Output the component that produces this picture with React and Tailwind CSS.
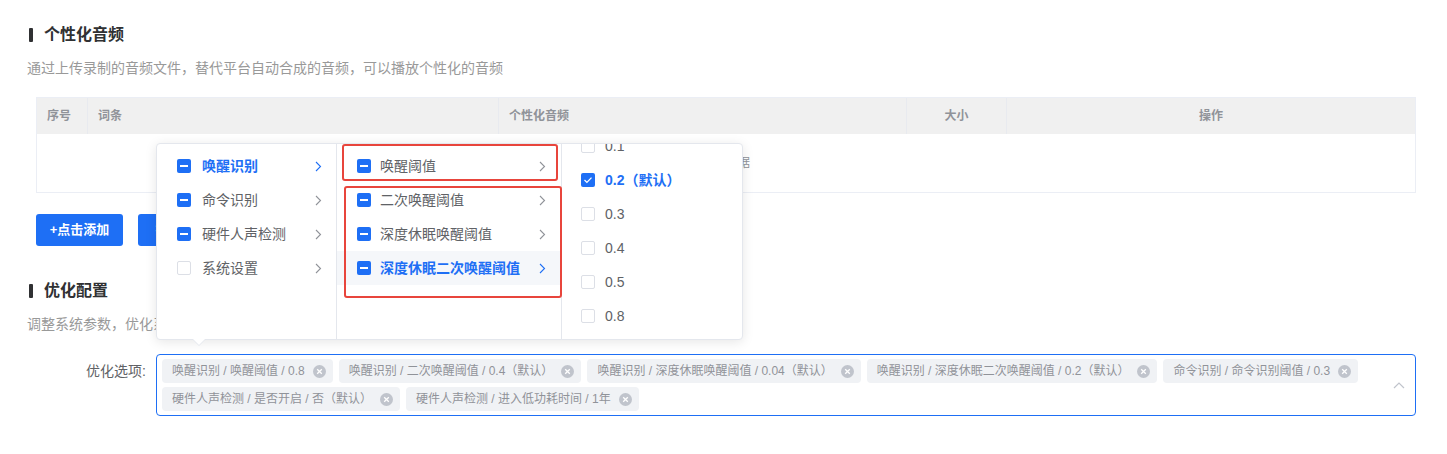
import React, { useLayoutEffect, useRef } from 'react';

const level1 = [
  { label: '唤醒识别', state: 'half', active: true },
  { label: '命令识别', state: 'half' },
  { label: '硬件人声检测', state: 'half' },
  { label: '系统设置', state: 'none' },
];

const level2 = [
  { label: '唤醒阈值', state: 'half' },
  { label: '二次唤醒阈值', state: 'half' },
  { label: '深度休眠唤醒阈值', state: 'half' },
  { label: '深度休眠二次唤醒阈值', state: 'half', active: true },
];

const level3 = [
  { label: '0.1', state: 'none' },
  { label: '0.2（默认）', state: 'checked', active: true },
  { label: '0.3', state: 'none' },
  { label: '0.4', state: 'none' },
  { label: '0.5', state: 'none' },
  { label: '0.8', state: 'none' },
];

const tags = [
  '唤醒识别 / 唤醒阈值 / 0.8',
  '唤醒识别 / 二次唤醒阈值 / 0.4（默认）',
  '唤醒识别 / 深度休眠唤醒阈值 / 0.04（默认）',
  '唤醒识别 / 深度休眠二次唤醒阈值 / 0.2（默认）',
  '命令识别 / 命令识别阈值 / 0.3',
  '硬件人声检测 / 是否开启 / 否（默认）',
  '硬件人声检测 / 进入低功耗时间 / 1年',
];

const Check = ({ state }) => {
  if (state === 'none') {
    return <span className="w-[14px] h-[14px] rounded-[2px] border border-[#dcdfe6] bg-white shrink-0" />;
  }
  return (
    <span className="w-[14px] h-[14px] rounded-[2px] bg-[#1e6ff5] flex items-center justify-center shrink-0">
      {state === 'half' ? (
        <span className="w-[8px] h-[2px] bg-white" />
      ) : (
        <svg width="10" height="8" viewBox="0 0 10 8">
          <path d="M1.5 4l2.4 2.4L8.5 1.6" stroke="#fff" strokeWidth="1.3" fill="none" />
        </svg>
      )}
    </span>
  );
};

const Chevron = ({ active }) => (
  <svg width="7" height="11" viewBox="0 0 7 11" className="shrink-0">
    <path d="M1 1l4.5 4.5L1 10" stroke={active ? '#1e6ff5' : '#909399'} strokeWidth="1.1" fill="none" />
  </svg>
);

const SectionTitle = ({ children }) => (
  <div className="flex items-center h-[22px] pl-[2px]">
    <span className="w-[4px] h-[14px] bg-[#303133] rounded-[1px]" />
    <span className="ml-[11px] text-[16px] font-bold text-[#303133] leading-[22px]">{children}</span>
  </div>
);

const Desc = ({ children }) => (
  <p className="mt-[12px] text-[14px] leading-[20px] text-[#999999]">{children}</p>
);

const CloseDot = () => (
  <span className="w-[13px] h-[13px] rounded-full bg-[#c0c4cc] flex items-center justify-center shrink-0">
    <svg width="7" height="7" viewBox="0 0 7 7">
      <path d="M1.2 1.2l4.6 4.6M5.8 1.2L1.2 5.8" stroke="#fff" strokeWidth="1.3" />
    </svg>
  </span>
);

export default function App() {
  const scrollRef = useRef(null);

  useLayoutEffect(() => {
    if (scrollRef.current) scrollRef.current.scrollTop = 20;
  }, []);

  return (
    <div className="relative w-[1447px] h-[454px] overflow-hidden bg-white font-['Liberation_Sans','Noto_Sans_CJK_SC',sans-serif]">
      <div className="pl-[27px] pr-[31px] pt-[24px]">
        <SectionTitle>个性化音频</SectionTitle>
        <Desc>通过上传录制的音频文件，替代平台自动合成的音频，可以播放个性化的音频</Desc>

        <div className="ml-[9px] mt-[19px] border border-[#ebeef5]">
          <div className="grid grid-cols-[51px_411px_408px_100px_1fr] h-[36px] bg-[#f0f0f0] text-[12px] font-bold text-[#909399]">
            <div className="flex items-center pl-[10px] border-r border-[#e8eaef]">序号</div>
            <div className="flex items-center pl-[10px] border-r border-[#e8eaef]">词条</div>
            <div className="flex items-center pl-[10px] border-r border-[#e8eaef]">个性化音频</div>
            <div className="flex items-center justify-center border-r border-[#e8eaef]">大小</div>
            <div className="flex items-center justify-center">操作</div>
          </div>
          <div className="h-[58px] flex items-center justify-center text-[12px] text-[#909399]">暂无数据</div>
        </div>

        <div className="ml-[9px] mt-[21px] flex gap-[15px]">
          <button className="w-[87px] h-[32px] rounded-[3px] bg-[#1e6ff5] text-white text-[13px] font-bold">+点击添加</button>
          <button className="w-[87px] h-[32px] rounded-[3px] bg-[#1e6ff5] text-white text-[13px] font-bold">批量上传</button>
        </div>

        <div className="mt-[34px]">
          <SectionTitle>优化配置</SectionTitle>
        </div>
        <Desc>调整系统参数，优化系统的识别效果与设备的使用体验</Desc>

        <div className="mt-[20px] flex">
          <label className="w-[129px] pr-[10px] text-right text-[14px] text-[#606266] leading-[24px] pt-[5px]">优化选项:</label>
          <div className="flex-1 min-h-[61px] border border-[#1e6ff5] rounded-[4px] flex items-center pl-[5px] pr-[8px]">
            <div className="flex-1 flex flex-wrap gap-x-[6px] gap-y-[4px] py-[4px] pr-[14px]">
              {tags.map((t) => (
                <span key={t} className="h-[24px] flex items-center gap-[8px] pl-[10px] pr-[7px] rounded-[4px] bg-[#f0f2f5] text-[12px] text-[#909399]">
                  {t}
                  <CloseDot />
                </span>
              ))}
            </div>
            <svg width="12" height="7" viewBox="0 0 12 7" className="shrink-0 mr-[2px]">
              <path d="M1 6l5-5 5 5" stroke="#c0c4cc" strokeWidth="1.2" fill="none" />
            </svg>
          </div>
        </div>
      </div>

      {/* cascader dropdown */}
      <div className="absolute left-[156px] top-[143px] w-[587px] h-[197px] bg-white border border-[#e4e7ed] rounded-[4px] shadow-[0_2px_12px_rgba(0,0,0,0.1)] flex text-[14px]">
        <div className="w-[180px] h-full border-r border-[#e4e7ed] pt-[5px]">
          {level1.map((it) => (
            <div key={it.label} className="h-[34px] flex items-center pl-[20px] pr-[14px]">
              <Check state={it.state} />
              <span className={`ml-[11px] flex-1 ${it.active ? 'text-[#1e6ff5] font-bold' : 'text-[#606266]'}`}>{it.label}</span>
              <Chevron active={it.active} />
            </div>
          ))}
        </div>
        <div className="w-[225px] h-full border-r border-[#e4e7ed] pt-[5px]">
          {level2.map((it) => (
            <div key={it.label} className={`h-[34px] flex items-center pl-[20px] pr-[15px] ${it.active ? 'bg-[#f5f7fa]' : ''}`}>
              <Check state={it.state} />
              <span className={`ml-[9px] flex-1 ${it.active ? 'text-[#1e6ff5] font-bold' : 'text-[#606266]'}`}>{it.label}</span>
              <Chevron active={it.active} />
            </div>
          ))}
        </div>
        <div ref={scrollRef} className="flex-1 h-full overflow-hidden">
          <div className="pt-[5px] pb-[6px]">
            {level3.map((it) => (
              <div key={it.label} className="h-[34px] flex items-center pl-[19px]">
                <Check state={it.state} />
                <span className={`ml-[10px] ${it.active ? 'text-[#1e6ff5] font-bold' : 'text-[#606266]'}`}>{it.label}</span>
              </div>
            ))}
          </div>
        </div>
        <span className="absolute left-[36px] -bottom-[6px] w-0 h-0 border-l-[6px] border-r-[6px] border-t-[6px] border-l-transparent border-r-transparent border-t-white drop-shadow-[0_1px_0_#e4e7ed]" />
      </div>

      {/* annotation boxes */}
      <div className="absolute left-[342px] top-[144px] w-[216px] h-[37px] border-2 border-[#e8453c] rounded-[3px]" />
      <div className="absolute left-[344px] top-[186px] w-[218px] h-[112px] border-2 border-[#e8453c] rounded-[3px]" />
    </div>
  );
}
